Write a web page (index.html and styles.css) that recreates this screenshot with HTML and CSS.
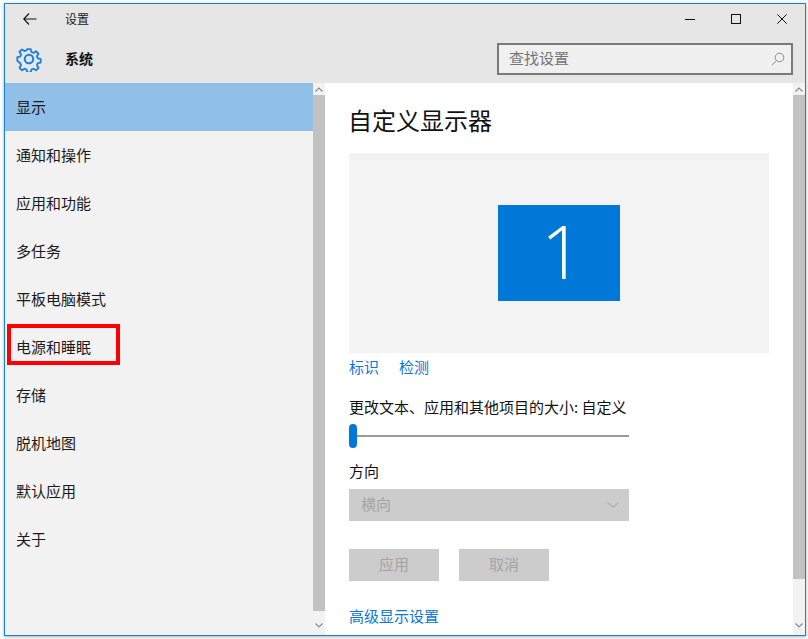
FILE: index.html
```html
<!DOCTYPE html>
<html lang="zh-CN">
<head>
<meta charset="utf-8">
<title>设置</title>
<link rel="stylesheet" href="styles.css">
</head>
<body>
<div class="window">
  <header class="titlebar">
    <svg class="back" width="14" height="12" viewBox="0 0 14 12"><path d="M6 .5 .8 6 6 11.500M1 6H13.500" fill="none" stroke="#111" stroke-width="1.100"/></svg>
    <span class="title">设置</span>
    <div class="controls">
      <svg width="10" height="10" viewBox="0 0 10 10"><path d="M0 5.500H10" stroke="#111"/></svg>
      <svg width="10" height="10" viewBox="0 0 10 10"><rect x=".5" y=".5" width="9" height="9" fill="none" stroke="#111"/></svg>
      <svg width="10" height="10" viewBox="0 0 10 10"><path d="M.3 .3 9.700 9.700M9.700 .3 .3 9.700" stroke="#111"/></svg>
    </div>
  </header>
  <div class="headbar">
    <svg class="gear" width="26" height="26" viewBox="0 0 26 26"><g fill="none" stroke="#1a80dc" stroke-width="2" stroke-linejoin="round"><circle cx="13" cy="13" r="4.200"/><path d="M11 2h4l.7 3.200 2.300 1 2.800-1.800 2.800 2.800-1.800 2.800 1 2.300 3.200.7v4l-3.200.7-1 2.300 1.800 2.800-2.800 2.800-2.800-1.800-2.300 1-.7 3.200h-4l-.7-3.200-2.300-1-2.800 1.800-2.800-2.800 1.800-2.800-1-2.300L-.0 15v-4l3.200-.7 1-2.300-1.800-2.800 2.800-2.800 2.800 1.800 2.300-1z" transform="translate(1.300 1.300) scale(.9)"/></g></svg>
    <span class="section">系统</span>
    <div class="search">
      <span class="search-text">查找设置</span>
      <svg width="14" height="14" viewBox="0 0 14 14"><circle cx="8.500" cy="5.500" r="4.300" fill="none" stroke="#8a8a8a"/><path d="M5.500 8.500 .8 13.200" stroke="#8a8a8a"/></svg>
    </div>
  </div>
  <div class="body">
    <nav class="sidebar">
      <a class="item active">显示</a>
      <a class="item">通知和操作</a>
      <a class="item">应用和功能</a>
      <a class="item">多任务</a>
      <a class="item">平板电脑模式</a>
      <a class="item marked">电源和睡眠<span class="mark"></span></a>
      <a class="item">存储</a>
      <a class="item">脱机地图</a>
      <a class="item">默认应用</a>
      <a class="item">关于</a>
    </nav>
    <div class="scrollbar">
      <svg class="arrow" width="8" height="5" viewBox="0 0 8 5"><path d="M.5 4.500 4 1l3.500 3.500" fill="none" stroke="#8c8c8c" stroke-width="1.200"/></svg>
      <div class="thumb thumb-left"></div>
      <svg class="arrow" width="8" height="5" viewBox="0 0 8 5"><path d="M.5 .5 4 4 7.500 .5" fill="none" stroke="#8c8c8c" stroke-width="1.200"/></svg>
    </div>
    <main class="content">
      <h1>自定义显示器</h1>
      <div class="preview"><div class="monitor">1</div></div>
      <div class="links"><a>标识</a><a>检测</a></div>
      <p class="label">更改文本、应用和其他项目的大小: 自定义</p>
      <div class="slider"><span class="knob"></span></div>
      <p class="label dir">方向</p>
      <div class="select"><span>横向</span><svg width="12" height="6" viewBox="0 0 12 6"><path d="M.3 .3 6 5.500 11.700 .3" fill="none" stroke="#b0b0b0" stroke-width="1.100"/></svg></div>
      <div class="buttons"><button>应用</button><button>取消</button></div>
      <a class="advanced">高级显示设置</a>
    </main>
    <div class="scrollbar">
      <svg class="arrow" width="8" height="5" viewBox="0 0 8 5"><path d="M.5 4.500 4 1l3.500 3.500" fill="none" stroke="#8c8c8c" stroke-width="1.200"/></svg>
      <div class="thumb thumb-right"></div>
      <svg class="arrow" width="8" height="5" viewBox="0 0 8 5"><path d="M.5 .5 4 4 7.500 .5" fill="none" stroke="#8c8c8c" stroke-width="1.200"/></svg>
    </div>
  </div>
</div>
</body>
</html>
```
FILE: styles.css
```css
* { box-sizing: border-box; }
html, body { height: 100%; }
body {
  margin: 0;
  padding: 3px 2px 3px 4px;
  background: #fdfdfd;
  overflow: hidden;
  font-family: "Noto Sans CJK SC", "Liberation Sans", sans-serif;
  font-size: 15px;
  color: #111;
}
.window {
  height: 633px;
  display: flex;
  flex-direction: column;
  border: 1px solid #1a7fd6;
  box-shadow: 0 1px 3px rgba(0,0,0,.3);
  background: #fff;
}
.titlebar {
  height: 32px;
  flex: none;
  display: flex;
  align-items: center;
  background: #e6e6e6;
  padding: 0 0 3px 18px;
}
.back { margin-right: 28px; }
.title { font-size: 12px; color: #222; }
.controls {
  margin-left: auto;
  display: flex;
  align-items: center;
  gap: 36px;
  padding-right: 18px;
}
.headbar {
  height: 47px;
  flex: none;
  display: flex;
  align-items: center;
  background: #e6e6e6;
  padding: 0 12px 0 11px;
}
.gear { margin-right: 23px; margin-top: -1px; }
.section { font-size: 14px; font-weight: 700; color: #111; padding-bottom: 4px; }
.search {
  margin-left: auto;
  width: 296px;
  height: 32px;
  margin-top: -2px;
  border: 2px solid #7a7a7a;
  background: #f0f0f0;
  display: flex;
  align-items: center;
  justify-content: space-between;
  padding: 0 6px 0 10px;
}
.search-text { font-size: 15px; color: #757575; padding-bottom: 2px; }
.body { flex: 1; display: flex; min-height: 0; }
.sidebar { width: 308px; flex: none; background: #f2f2f2; }
.item {
  position: relative;
  display: flex;
  align-items: center;
  height: 48px;
  padding: 0 0 2px 11px;
  font-size: 15px;
  color: #1a1a1a;
}
.active { background: #90bfe8; }
.mark {
  position: absolute;
  left: 2px;
  top: 1px;
  width: 113px;
  height: 41px;
  border: 4px solid #fe0000;
}
.scrollbar {
  width: 12px;
  flex: none;
  display: flex;
  flex-direction: column;
  align-items: center;
  background: #f2f2f2;
}
.arrow { flex: none; margin: 4px 0 3px; }
.thumb { width: 100%; background: #c2c2c2; }
.thumb-left { height: 516px; margin-bottom: 8px; }
.thumb-right { height: 484px; margin-bottom: 40px; }
.content { flex: 1; background: #fff; padding: 0 24px; overflow: hidden; }
h1 {
  margin: 17px 0 0 -1px;
  font-size: 24px;
  font-weight: 400;
  line-height: 40px;
  color: #111;
}
.preview {
  margin-top: 13px;
  height: 200px;
  width: 420px;
  background: #f3f3f3;
  display: flex;
  justify-content: center;
  padding-top: 52px;
}
.monitor {
  width: 122px;
  height: 96px;
  background: #0078d7;
  color: #fff;
  font-family: "Open Sans", "Liberation Sans", sans-serif;
  font-weight: 300;
  font-size: 74px;
  line-height: 92px;
  padding-left: 6px;
  text-align: center;
}
.links { display: flex; gap: 20px; margin-top: 4px; line-height: 20px; }
.links a, .advanced { color: #0a78d6; font-size: 15px; }
.label { margin: 0; font-size: 15px; line-height: 20px; }
.links + .label { margin-top: 20px; }
.slider {
  position: relative;
  width: 280px;
  height: 24px;
  margin-top: 7px;
  display: flex;
  align-items: center;
}
.slider::before { content: ""; flex: 1; height: 2px; background: #999; }
.knob {
  position: absolute;
  left: 0;
  top: 0;
  width: 8px;
  height: 24px;
  border-radius: 4px;
  background: #0078d7;
}
.dir { margin-top: 13px; }
.select {
  width: 280px;
  height: 32px;
  margin-top: 8px;
  background: #cccccc;
  color: #a3a3a3;
  display: flex;
  align-items: center;
  justify-content: space-between;
  padding: 0 10px 0 12px;
}
.select span { padding-bottom: 4px; }
.buttons { display: flex; gap: 20px; margin-top: 28px; }
button {
  width: 90px;
  height: 32px;
  border: 0;
  padding: 0 0 4px;
  background: #cccccc;
  color: #a3a3a3;
  font: inherit;
}
.advanced { display: block; margin-top: 25px; line-height: 20px; }
```
